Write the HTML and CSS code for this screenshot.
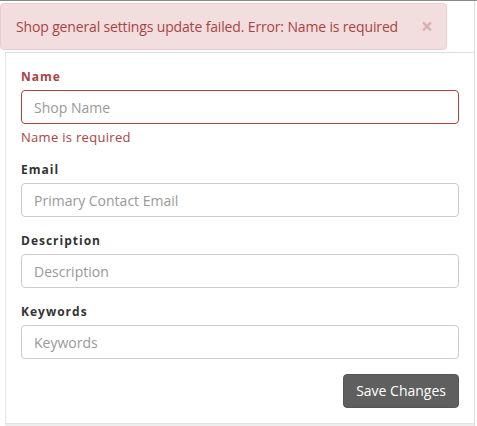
FILE: index.html
```html
<!DOCTYPE html>
<html>
<head>
<meta charset="utf-8">
<link rel="stylesheet" href="styles.css">
</head>
<body>
<div class="page">
  <div class="alert">
    <span class="alert-text">Shop general settings update failed. Error: Name is required</span>
    <span class="close">&times;</span>
  </div>
  <form class="panel">
    <div class="group has-error">
      <label class="label">Name</label>
      <input class="input" type="text" placeholder="Shop Name">
      <div class="help">Name is required</div>
    </div>
    <div class="group">
      <label class="label">Email</label>
      <input class="input" type="text" placeholder="Primary Contact Email">
    </div>
    <div class="group">
      <label class="label">Description</label>
      <input class="input" type="text" placeholder="Description">
    </div>
    <div class="group">
      <label class="label">Keywords</label>
      <input class="input" type="text" placeholder="Keywords">
    </div>
    <div class="actions">
      <button class="btn" type="button">Save Changes</button>
    </div>
  </form>
</div>
</body>
</html>
```

FILE: styles.css
```css
html, body {
  margin: 0;
  padding: 0;
  background: #fff;
}
body {
  font-family: "Open Sans", "Liberation Sans", sans-serif;
  font-size: 14px;
  color: #333;
  border-top: 1px solid #8a8a8a;
  height: 425px;
  overflow: hidden;
}
.page {
  position: relative;
  margin-left: 5px;
  width: 469px;
  border-right: 1px solid #ddd;
  padding-top: 51px;
  height: 374px;
}
.alert {
  position: absolute;
  left: -5px;
  top: 2px;
  width: 415px;
  height: 19px;
  padding: 13px 15px;
  background: #f2dede;
  border: 1px solid #ebccd1;
  border-radius: 4px;
  color: #a94442;
  line-height: 19px;
  display: flex;
  justify-content: space-between;
  align-items: center;
  z-index: 2;
}
.alert-text {
  letter-spacing: -0.15px;
}
.close {
  font-size: 21px;
  font-weight: bold;
  color: #a94442;
  opacity: 0.3;
  line-height: 19px;
  margin-right: -2px;
}
.panel {
  margin: 0;
  border: 1px solid #e6e6e6;
  border-right: none;
  border-top: 1px solid #ddd;
  border-bottom: 1px solid #e2e2e2;
  padding: 15px 15px 15px 15px;
  box-shadow: 0 2px 0 #eeeeee;
}
.group {
  margin-bottom: 15px;
  display: flex;
  flex-direction: column;
}
.label {
  font-size: 12px;
  font-weight: bold;
  letter-spacing: 1px;
  line-height: 17px;
  margin-bottom: 5px;
  color: #333;
}
.input {
  box-sizing: border-box;
  height: 34px;
  width: 438px;
  padding: 6px 12px;
  font-family: "Open Sans", "Liberation Sans", sans-serif;
  font-size: 14px;
  color: #555;
  border: 1px solid #ccc;
  border-radius: 4px;
  background: #fff;
  outline: none;
  margin: 0;
}
.input::placeholder {
  color: #999;
}
.has-error .label {
  color: #a94442;
}
.has-error .input {
  border-color: #a94442;
}
.help {
  margin-top: 4px;
  font-size: 13px;
  line-height: 18px;
  color: #a94442;
  letter-spacing: 0.3px;
}
.actions {
  display: flex;
  justify-content: flex-end;
}
.btn {
  height: 34px;
  padding: 6px 12px;
  font-family: "Open Sans", "Liberation Sans", sans-serif;
  font-size: 14px;
  color: #fff;
  background: #5f5f5f;
  border: 1px solid #555;
  border-radius: 4px;
  line-height: 20px;
}
```
